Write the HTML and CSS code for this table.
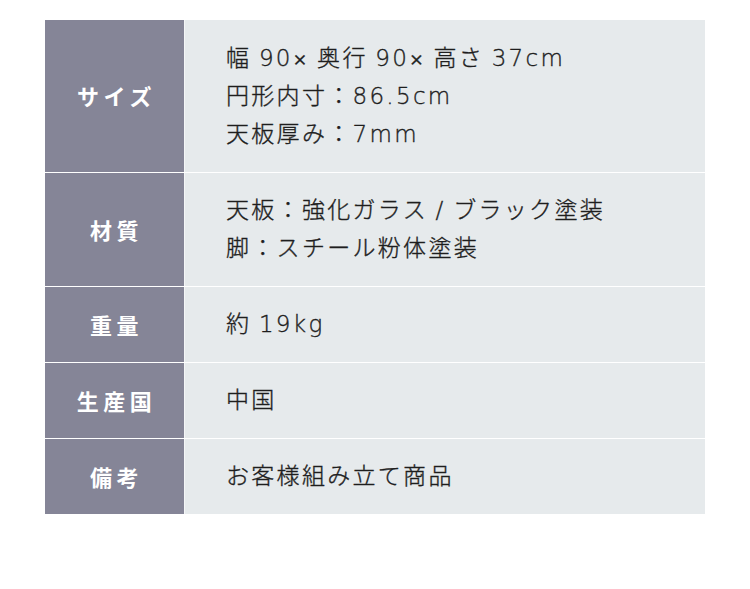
FILE: index.html
```html
<!DOCTYPE html>
<html lang="ja">
<head>
<meta charset="utf-8">
<link rel="stylesheet" href="styles.css">
</head>
<body>
<div class="spec">
  <div class="row">
    <div class="label">サイズ</div>
    <div class="value">幅 90<span class="x">×</span> 奥行 90<span class="x">×</span> 高さ 37cm<br>円形内寸：86.5cm<br>天板厚み：7mm</div>
  </div>
  <div class="row">
    <div class="label">材質</div>
    <div class="value">天板：強化ガラス / ブラック塗装<br>脚：スチール粉体塗装</div>
  </div>
  <div class="row">
    <div class="label">重量</div>
    <div class="value">約 19kg</div>
  </div>
  <div class="row">
    <div class="label">生産国</div>
    <div class="value">中国</div>
  </div>
  <div class="row">
    <div class="label">備考</div>
    <div class="value">お客様組み立て商品</div>
  </div>
</div>
</body>
</html>
```
FILE: styles.css
```css
html, body {
  margin: 0;
  padding: 0;
  background: #ffffff;
}
body {
  font-family: "Noto Sans CJK JP", "Noto Sans", sans-serif;
}
.spec {
  width: 660px;
  margin: 20px 0 0 45px;
}
.row {
  display: flex;
}
.row + .row {
  border-top: 1px solid #ffffff;
}
.label {
  width: 139px;
  flex: none;
  background: #858597;
  color: #ffffff;
  font-size: 22px;
  font-weight: 700;
  letter-spacing: 4.5px;
  display: flex;
  align-items: center;
  justify-content: center;
  padding: 0 0 2px 4px;
  box-sizing: border-box;
}
.value {
  flex: 1;
  background: #e6eaec;
  border-left: 1px solid #f4f6f7;
  padding: 19px 20px 19px 41px;
  font-family: "DejaVu Sans", "Noto Sans CJK JP", sans-serif;
  font-size: 23px;
  font-weight: 300;
  line-height: 38px;
  letter-spacing: 2.3px;
  word-spacing: -2px;
  color: #1e1e1e;
  -webkit-text-stroke: 0.35px #1e1e1e;
}
.value .x {
  font-family: "Inter", sans-serif;
  font-size: 22px;
  font-weight: 300;
  line-height: 1;
}
.row + .row .value {
  padding-top: 18px;
}
```
